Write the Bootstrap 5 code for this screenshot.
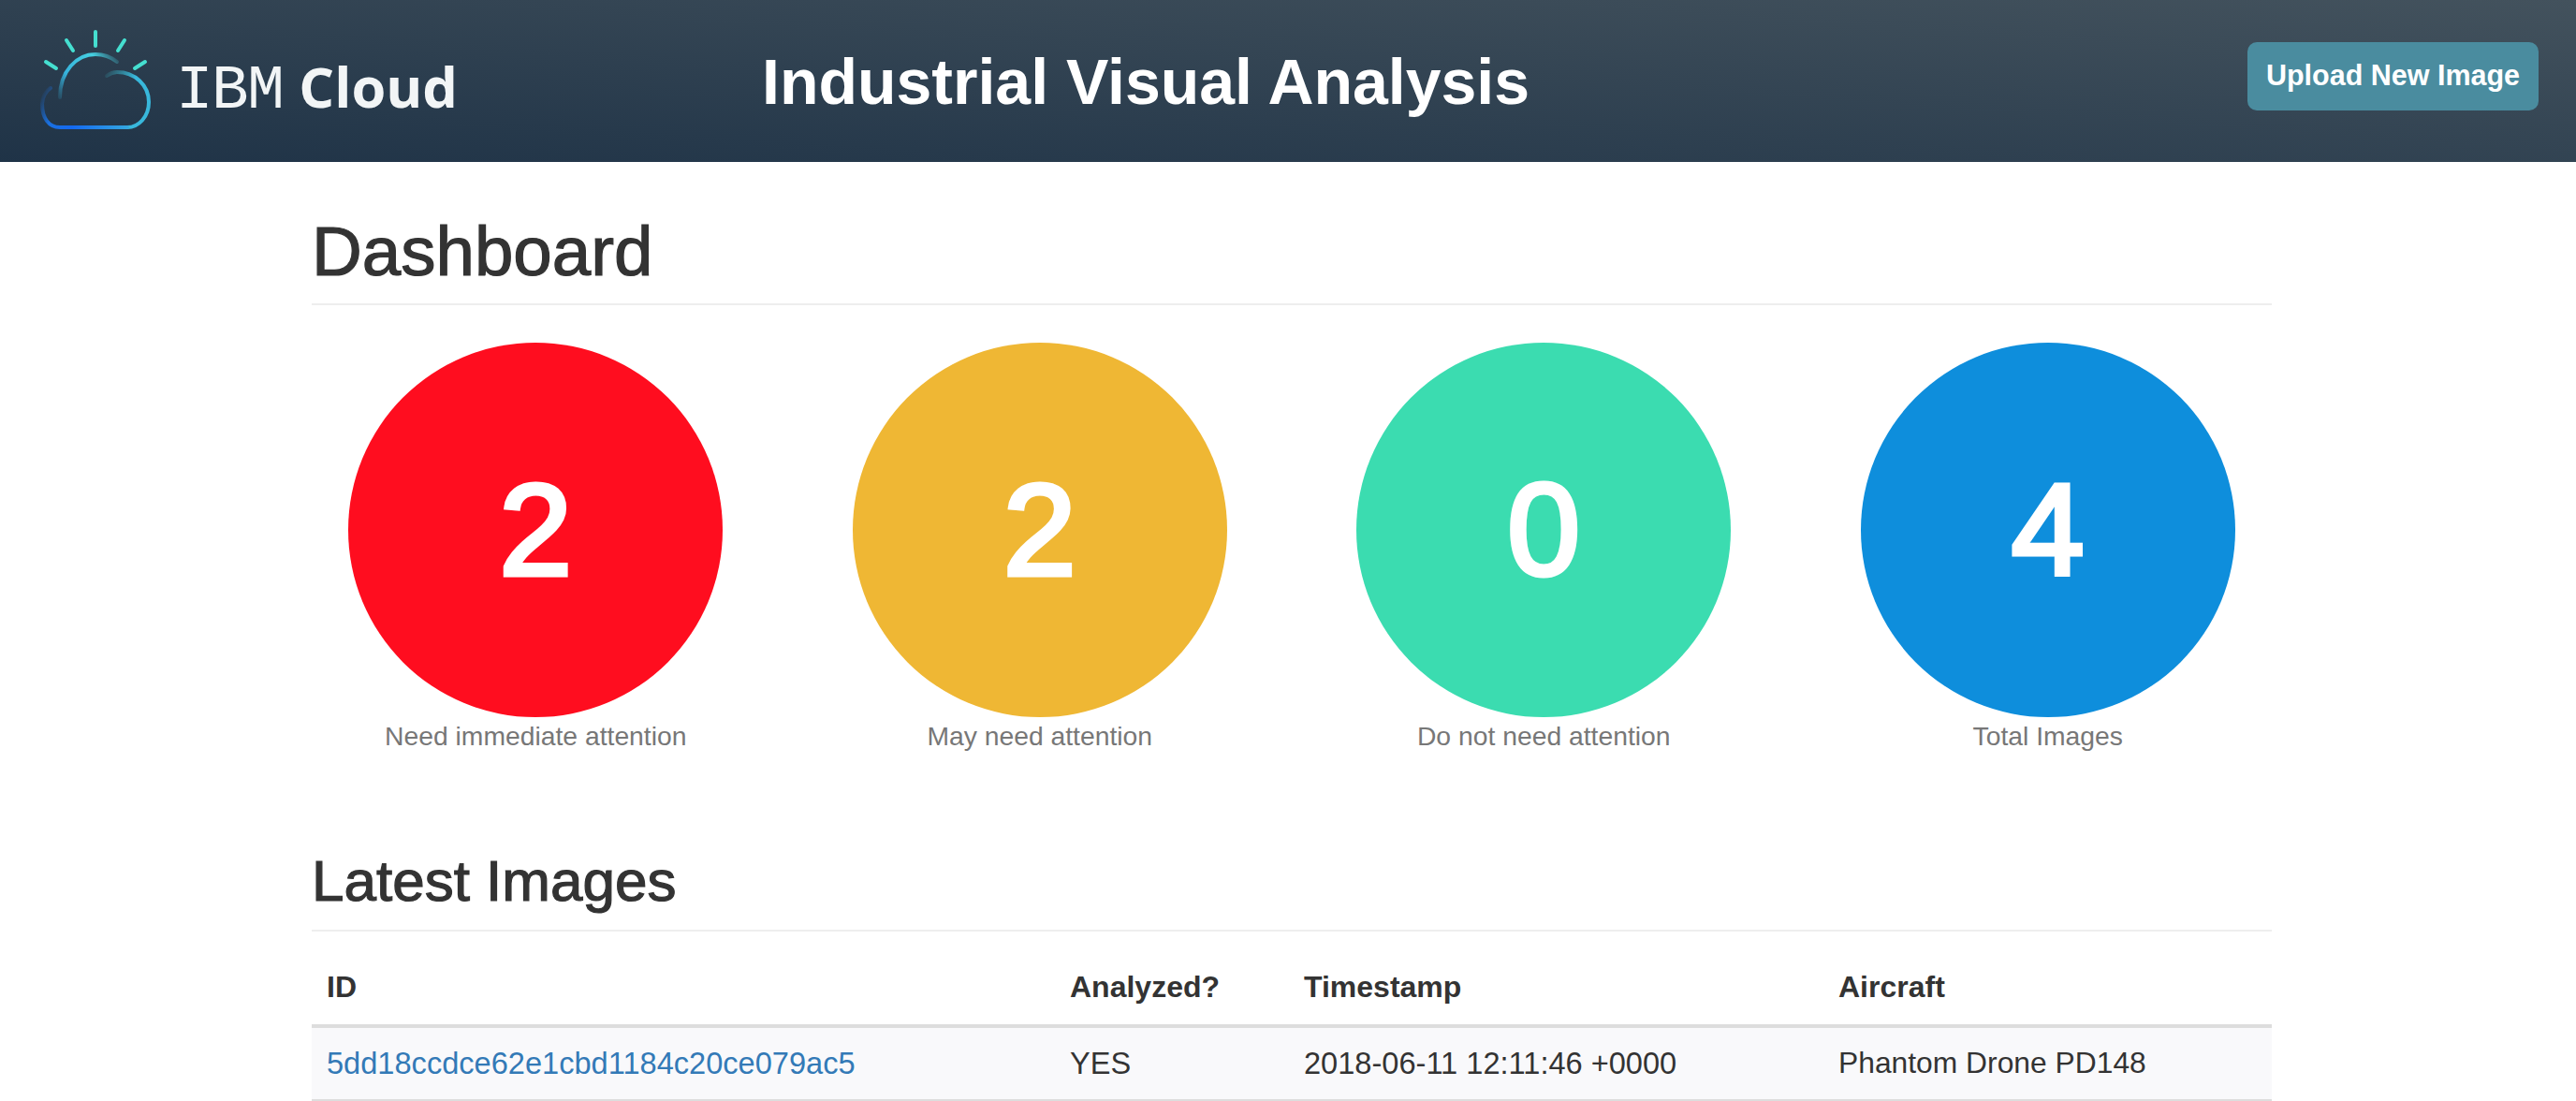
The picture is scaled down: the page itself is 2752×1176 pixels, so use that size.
<!DOCTYPE html>
<html lang="en">
<head>
  <meta charset="UTF-8" />
  <title>Industrial Visual Analysis</title>
  <link href="https://cdn.jsdelivr.net/npm/bootstrap@5.3.2/dist/css/bootstrap.min.css" rel="stylesheet" />
  <style>
    body {
      font-family: "Liberation Sans", Arial, sans-serif;
      color: #333;
      background: #fff;
    }
    .top-bar {
      height: 173px;
      padding: 0 40px;
      background: linear-gradient(4deg, #1f3347 0%, #43525d 100%);
    }
    .logo-box { width: 774px; }
    .logo-text { color: #f2f5f6; margin-left: 18px; margin-top: 20px; line-height: 1; white-space: nowrap; }
    .logo-ibm { font-family: "Liberation Mono", monospace; font-size: 66px; letter-spacing: -1.5px; }
    .logo-cloud { font-family: "Open Sans", sans-serif; font-size: 59.5px; font-weight: 700; margin-left: 17px; }
    .app-title { font-size: 68px; font-weight: 700; color: #fff; line-height: 1; margin: 0; }
    .upload-btn {
      width: 311px; height: 73px; padding: 0; margin-bottom: 11px;
      background: #4a8c9f; border: 0; border-radius: 10px;
      color: #fff; font-size: 30.5px; font-weight: 700;
    }
    .page-wrap { width: 2094px; margin-left: 333px; }
    .sec-title { font-weight: 400; color: #333; line-height: 1.1; margin: 0; border-bottom: 2px solid #eee; -webkit-text-stroke: 1.2px #333; }
    .sec-main { font-size: 74.5px; padding: 55px 0 14px; }
    .sec-sub { font-size: 62px; padding: 0 0 18px; margin-top: 102px; }
    .circle-row { padding-top: 40px; margin: 0 -30px; }
    .circle-col { width: 25%; }
    .big-circle { width: 400px; height: 400px; color: #fff; font-size: 140px; font-weight: 400; -webkit-text-stroke: 5px #fff; }
    .c-red { background: #ff0d1f; }
    .c-amber { background: #efb734; }
    .c-green { background: #3bdcb0; }
    .c-blue { background: #0e8edc; }
    .circle-cap { font-size: 28.3px; color: #777; line-height: 1.3; margin-top: 2px; }
    .img-table { --bs-table-color: #333; --bs-table-bg: transparent; color: #333; margin: 18px 0 0; table-layout: fixed; }
    .img-table th, .img-table td { line-height: 1.43; }
    .img-table th { font-size: 32px; font-weight: 700; padding: 19px 16px 16px; border-bottom: 4px solid #ddd; }
    .img-table td { font-size: 32.6px; padding: 15px 16px; border-bottom: 2px solid #ddd; background: #f9f9fb; }
    .img-table td:last-child { font-size: 31.8px; }
    .img-table a { color: #337ab7; text-decoration: none; }
  </style>
</head>
<body>

<header class="top-bar d-flex align-items-center">
  <div class="logo-box d-flex align-items-center">
    <svg width="130" height="112" viewBox="0 0 130 112" fill="none" stroke-linecap="round">
      <defs>
        <linearGradient id="sunArc" gradientUnits="userSpaceOnUse" x1="24" y1="78" x2="86" y2="32">
          <stop offset="0" stop-color="#2f9fc8" stop-opacity="0.1" />
          <stop offset="0.3" stop-color="#36b2dc" />
          <stop offset="0.75" stop-color="#45cfe0" />
          <stop offset="1" stop-color="#45cfe0" stop-opacity="0.15" />
        </linearGradient>
        <linearGradient id="cloudRight" gradientUnits="userSpaceOnUse" x1="74" y1="46" x2="100" y2="60">
          <stop offset="0" stop-color="#3ac0d0" stop-opacity="0.1" />
          <stop offset="1" stop-color="#38b8dc" />
        </linearGradient>
        <linearGradient id="cloudBase" gradientUnits="userSpaceOnUse" x1="96" y1="105" x2="10" y2="62">
          <stop offset="0" stop-color="#33a6e0" />
          <stop offset="0.55" stop-color="#1469f0" />
          <stop offset="0.8" stop-color="#1a70e0" />
          <stop offset="1" stop-color="#1a70e0" stop-opacity="0.1" />
        </linearGradient>
      </defs>
      <g stroke="#45dfd0" stroke-width="4">
        <path d="M62 3V18" />
        <path d="M31 12L38 23" />
        <path d="M93 12L86 23" />
        <path d="M9 35L20 42" />
        <path d="M115 35L104 42" />
      </g>
      <path d="M24 73C24 45 42 27 62 27C72 27 80 31 85 35" stroke="url(#sunArc)" stroke-width="4" />
      <path d="M74 50C78 47 82 46 85 46C104 46 119 60 119 78C119 94 108 105 96 105" stroke="url(#cloudRight)" stroke-width="4" />
      <path d="M96 105H24C12 105 5 95 5 80C5 73 9 66 14 63" stroke="url(#cloudBase)" stroke-width="4" />
    </svg>
    <div class="logo-text"><span class="logo-ibm">IBM</span><span class="logo-cloud">Cloud</span></div>
  </div>
  <h1 class="app-title flex-grow-1">Industrial Visual Analysis</h1>
  <button type="button" class="btn upload-btn">Upload New Image</button>
</header>

<main class="page-wrap">
  <h2 class="sec-title sec-main">Dashboard</h2>

  <div class="circle-row d-flex">
    <div class="circle-col d-flex flex-column align-items-center">
      <div class="big-circle c-red rounded-circle d-flex align-items-center justify-content-center">2</div>
      <div class="circle-cap">Need immediate attention</div>
    </div>
    <div class="circle-col d-flex flex-column align-items-center">
      <div class="big-circle c-amber rounded-circle d-flex align-items-center justify-content-center">2</div>
      <div class="circle-cap">May need attention</div>
    </div>
    <div class="circle-col d-flex flex-column align-items-center">
      <div class="big-circle c-green rounded-circle d-flex align-items-center justify-content-center">0</div>
      <div class="circle-cap">Do not need attention</div>
    </div>
    <div class="circle-col d-flex flex-column align-items-center">
      <div class="big-circle c-blue rounded-circle d-flex align-items-center justify-content-center">4</div>
      <div class="circle-cap">Total Images</div>
    </div>
  </div>

  <h3 class="sec-title sec-sub">Latest Images</h3>

  <table class="table img-table">
    <colgroup>
      <col style="width: 794px" />
      <col style="width: 250px" />
      <col style="width: 571px" />
      <col />
    </colgroup>
    <thead>
      <tr><th>ID</th><th>Analyzed?</th><th>Timestamp</th><th>Aircraft</th></tr>
    </thead>
    <tbody>
      <tr>
        <td><a href="#">5dd18ccdce62e1cbd1184c20ce079ac5</a></td>
        <td>YES</td>
        <td>2018-06-11 12:11:46 +0000</td>
        <td>Phantom Drone PD148</td>
      </tr>
    </tbody>
  </table>
</main>

<script src="https://cdn.jsdelivr.net/npm/bootstrap@5.3.2/dist/js/bootstrap.bundle.min.js"></script>
</body>
</html>
